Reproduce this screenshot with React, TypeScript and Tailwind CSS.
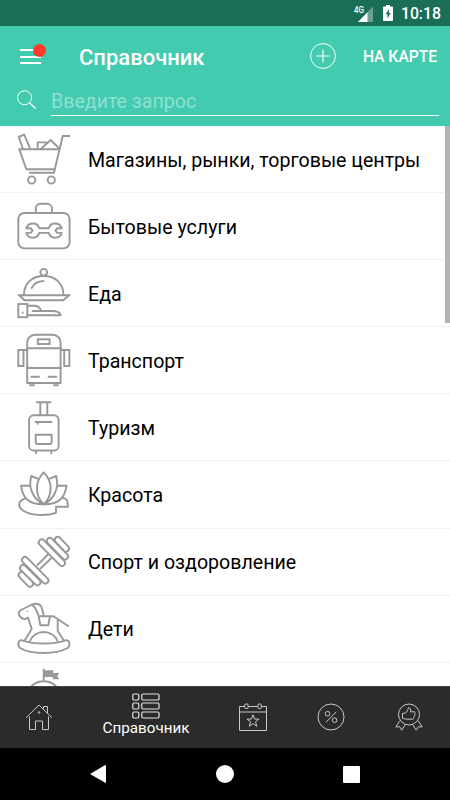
import type { ReactNode } from "react";

interface Category {
  label: string;
  icon: ReactNode;
}

// Capsule outline: a thick grey line with a thinner white one on top
function Plate({ x1, y1, x2, y2 }: { x1: number; y1: number; x2: number; y2: number }) {
  const d = `M${x1} ${y1}L${x2} ${y2}`;
  return (
    <>
      <path d={d} stroke="#989898" strokeWidth="8" />
      <path d={d} stroke="#fff" strokeWidth="4.2" />
    </>
  );
}

const CATEGORIES: Category[] = [
  {
    label: "Магазины, рынки, торговые центры",
    icon: (
      <>
        <path d="M70 10h-7.3L54 46.7H29" strokeLinecap="butt" />
        <path d="M18.3 23.3h41M19.3 23.3l7 20h28" strokeLinecap="butt" />
        <path d="M23 23L18.7 11l5.5-2.3 6 14M37.7 23v-6.6h9M41 22.7l9.7-8.7 8.6 8.7" />
        <circle cx="31.7" cy="54" r="3.6" />
        <circle cx="51.3" cy="54" r="3.6" />
      </>
    ),
  },
  {
    label: "Бытовые услуги",
    icon: (
      <>
        <rect x="18.3" y="20" width="51.3" height="35.4" rx="6" />
        <path d="M35.8 20v-4.5a4.7 4.7 0 0 1 4.7-4.7h6.7a4.7 4.7 0 0 1 4.7 4.7V20" />
        <path d="M26.3 35.3h4.5l1.8 2.3-1.8 2.3h-4.5c.9 3 3.5 4.8 6.7 4.8 2.9 0 5.3-1.8 6.3-4.8h9.4c1 3 3.4 4.8 6.3 4.8 3.2 0 5.8-1.8 6.7-4.8h-4.5l-1.8-2.3 1.8-2.3h4.5c-.9-3-3.5-4.8-6.7-4.8-2.9 0-5.3 1.8-6.3 4.8h-9.4c-1-3-3.4-4.8-6.3-4.8-3.2 0-5.8 1.8-6.7 4.8z" />
      </>
    ),
  },
  {
    label: "Еда",
    icon: (
      <>
        <circle cx="43.7" cy="12.3" r="3.4" />
        <path d="M24 34.5C24 23.5 32 16 43.7 16s19.7 7.5 19.7 18.5M31.6 28c2-4 6-6.7 12-7" />
        <path d="M18.6 35.3h51M20 36l4.5 4.3h38.7l5-4.3" />
        <rect x="18.3" y="44" width="9" height="13.2" strokeLinejoin="miter" />
        <path d="M22.7 52.5v.2M27.5 45.7h7c3 0 5 1.6 6.3 4M32.6 51h19c5 0 8.5 1 9 4.2H27.5" />
      </>
    ),
  },
  {
    label: "Транспорт",
    icon: (
      <>
        <path d="M27.2 56V15.7a8 8 0 0 1 8-8h17.4a8 8 0 0 1 8 8V56z" />
        <path d="M27 21.3h34M27 41h34M31.3 49.7H39M48.6 49.7h7.7" />
        <rect x="37.8" y="12.3" width="11.8" height="4.7" strokeLinejoin="miter" />
        <path d="M27 23h-8.7v16h5.2V23M61 23h8.4v16h-5.2V23M30 58.3h4M54 58.3h4" strokeLinejoin="miter" />
      </>
    ),
  },
  {
    label: "Туризм",
    icon: (
      <>
        <path d="M36.7 8.2h13.8M40.3 8.5V21M47.3 8.5V21" />
        <rect x="29.1" y="21.3" width="29.5" height="35.2" rx="4.6" />
        <path d="M35.5 28h16M37.8 28v1.8M36 57v2.2M51.3 57v2.2" />
        <path d="M35.7 40.7h16v7.3a2 2 0 0 1-2 2h-12a2 2 0 0 1-2-2z" />
      </>
    ),
  },
  {
    label: "Красота",
    icon: (
      <>
        <path d="M43.7 11.3C38.5 16.5 37 22 37 27c0 7 3 13 6.7 16.3C47.4 40 50.6 34 50.6 27c0-5-1.7-10.5-6.9-15.7z" />
        <path d="M37.6 17.7L31.2 15c-1.2 7-1.8 10 1 16.5 2.2 5 6.5 9.5 11.5 11.8M49.8 17.7l6.4-2.7c1.2 7 1.8 10-1 16.5-2.2 5-6.5 9.5-11.5 11.8" />
        <path d="M29.5 24.8H21c.8 5 2 10 6.5 14 4 3.5 10 4.7 16.2 4.5M58 24.8h8.5c-.8 5-2 10-6.5 14-4 3.5-10 4.7-16.3 4.5" />
        <path d="M25.5 37.3c-4 1.2-6.7 3.5-6.2 7C20 50 30 54 42 54c6 0 10-.7 14-2.2v-6h12l-.7-6.3c-1.5-2-3.5-2.5-5.3-2.7" />
      </>
    ),
  },
  {
    label: "Спорт и оздоровление",
    icon: (
      <>
        <path d="M37.5 37L48 26.5M40.5 40.5L51.5 30" />
        <Plate x1={57.7} y1={11.9} x2={66} y2={20.5} />
        <Plate x1={49.8} y1={13} x2={65} y2={28.5} />
        <Plate x1={41.7} y1={14.5} x2={62} y2={35} />
        <Plate x1={21.7} y1={47} x2={30} y2={55.7} />
        <Plate x1={23} y1={40} x2={37.5} y2={54.2} />
        <Plate x1={25} y1={32} x2={45.4} y2={52.5} />
      </>
    ),
  },
  {
    label: "Дети",
    icon: (
      <>
        <path d="M22 45.3c-4.3-.8-5 6-1.5 8 11 6.3 35.5 6.3 46.5 0 3.8-2 3-8.8-1.3-8-13 4.3-30.7 4.3-43.7 0z" />
        <path d="M30 46c2-5.5 7.5-9 13.7-9S55.5 40.5 57.5 46M25 45l6.7-11-3.7-11.5c-2.5 2-5 2-7.5-.5-2.5-2.2-2.3-5.3.5-7L31 10c6-2.5 9-1.5 10.5 2l2.5 9.3h9.5c5 2.7 9.5 6.5 14.7 9.7M57.7 25v11l5.8 9M32 10c3.5 1 5 6 6.7 11.3l1.6 8.9h8l1.7-8.9M38.7 21.3H44" />
        <path d="M27.3 16.3v.1" strokeWidth="1.4" />
      </>
    ),
  },
  {
    label: "",
    icon: (
      <>
        <path d="M43.7 7.5V19M26 37a17.7 17.7 0 1 1 35.4 0" />
        <path d="M44 8.3h9.2V11h6L57.3 14l2.2 3.2h-6.8v-2.3H44z" fill="#989898" stroke="none" />
      </>
    ),
  },
];

function CategoryRow({ label, icon }: Category) {
  return (
    <div className="flex h-[67.1px] shrink-0 items-center border-b border-[#f1f1ec]">
      <svg
        viewBox="0 0 88 67"
        className="h-[67px] w-[88px] shrink-0"
        fill="none"
        stroke="#989898"
        strokeWidth="1.9"
        strokeLinecap="round"
        strokeLinejoin="round"
      >
        {icon}
      </svg>
      <span className="mt-[3px] whitespace-nowrap text-[19.6px] leading-6">{label}</span>
    </div>
  );
}

function StatusBar() {
  return (
    <div className="flex h-[26px] items-center justify-end bg-[#1a6e58] pr-[9px] text-white">
      <svg viewBox="0 0 20 18" className="mt-px h-[18px] w-5">
        <path d="M19 1.5V17H4z" fill="#fff" fillOpacity=".35" />
        <path d="M13.5 7.2V17H4z" fill="#fff" />
        <text x="0" y="8" fill="#fff" fontSize="9.5" fontWeight="500" textLength="10" lengthAdjust="spacingAndGlyphs">
          4G
        </text>
      </svg>
      <svg viewBox="0 0 10 16" className="ml-[9px] h-4 w-[10px]" fill="#fff">
        <path d="M3 0h4v1.6h2.3q.7 0 .7.7v13q0 .7-.7.7H.7q-.7 0-.7-.7v-13q0-.7.7-.7H3z" />
        <path d="M6 4L2.5 9.3h2V13.500L7.7 8H5.800z" fill="#1a6e58" />
      </svg>
      <span className="ml-2 mt-[2px] text-[15.8px] font-medium leading-none">10:18</span>
    </div>
  );
}

function Header() {
  return (
    <header className="h-[100px] bg-[#43cbb0] text-white">
      <div className="flex h-[62px] items-center">
        <div className="relative mb-px ml-5 h-[15px] w-[21px]">
          <div className="flex h-full flex-col justify-between">
            <div className="h-[2px] bg-white" />
            <div className="h-[2px] bg-white" />
            <div className="h-[2px] bg-white" />
          </div>
          <div className="absolute -top-[5px] left-[13px] size-[13px] rounded-full bg-[#ff3a2b]" />
        </div>
        <h1 className="ml-[38px] mt-px text-[22px] font-medium">Справочник</h1>
        <svg viewBox="0 0 26 26" className="ml-auto mb-[2px] size-[26px]" fill="none" stroke="#fff">
          <circle cx="13" cy="13" r="12.4" />
          <path d="M6.5 13h13M13 6.5v13" strokeWidth="1.2" />
        </svg>
        <span className="ml-[27px] mr-[13px] mt-[2px] text-[15.6px] font-medium">НА КАРТЕ</span>
      </div>
      <div className="flex h-[38px] items-start">
        <svg viewBox="0 0 20 20" className="ml-[17px] mt-[2px] size-5" fill="none" stroke="#fff">
          <circle cx="7.6" cy="7.7" r="7" />
          <path d="M12.7 13l6 5.5" strokeWidth="1.4" />
        </svg>
        <div className="ml-[14px] mr-[11px] h-[28px] flex-1 border-b border-white text-[19.6px] leading-[28px] text-[#8ee0d0]">
          Введите запрос
        </div>
      </div>
    </header>
  );
}

function TabBar() {
  return (
    <nav className="flex h-[62px] shrink-0 items-center border-t border-[#454545] bg-[#2b2b2b] text-white">
      <div className="flex w-[78px] justify-center">
        <svg viewBox="0 0 28 28" className="mb-[2px] size-7" fill="none" stroke="#c8c8c8">
          <path d="M1 14.8L14 2l13 12.8M4.5 13.5v13h6v-8.5h7v8.5h6v-13M18.5 5.8V3.5h4V10" />
          <circle cx="14" cy="9.5" r=".8" />
        </svg>
      </div>
      <div className="flex h-full w-[136px] flex-col items-center">
        <svg viewBox="0 0 28 26" className="mt-[6px] h-[26px] w-7" fill="none" stroke="#e4e4e4" strokeWidth="1.2">
          <rect x=".8" y="1" width="6" height="6" rx="1.2" />
          <rect x="9.8" y="1" width="17.2" height="6" rx="1.2" />
          <rect x=".8" y="10" width="6" height="6" rx="1.2" />
          <rect x="9.8" y="10" width="17.2" height="6" rx="1.2" />
          <rect x=".8" y="19" width="6" height="6" rx="1.2" />
          <rect x="9.8" y="19" width="17.2" height="6" rx="1.2" />
        </svg>
        <span className="text-[15.2px] leading-[18px]">Справочник</span>
      </div>
      <div className="flex w-[78px] justify-center">
        <svg viewBox="0 0 28 28" className="mb-[2px] size-7" fill="none" stroke="#c8c8c8">
          <path d="M5.5 3.5h-5v24h27v-24h-5M9.5 3.5h9M.5 9h27" />
          <rect x="5.7" y="1" width="3.4" height="4.5" rx="1" />
          <rect x="18.9" y="1" width="3.4" height="4.5" rx="1" />
          <path d="M14 11.8l1.6 4.3h4.4l-3.5 2.7 1.3 4.5-3.8-2.7-3.8 2.7 1.3-4.5L8 16.1h4.4z" />
        </svg>
      </div>
      <div className="flex w-[78px] justify-center">
        <svg viewBox="0 0 28 28" className="mb-[2px] size-7" fill="none" stroke="#c8c8c8">
          <circle cx="14" cy="14" r="13" />
          <circle cx="10.6" cy="10.7" r="2.3" />
          <circle cx="17.6" cy="17.2" r="2.3" />
          <path d="M19.3 8.8L9 19.3" />
        </svg>
      </div>
      <div className="flex w-[78px] justify-center">
        <svg viewBox="0 0 28 28" className="mb-[2px] size-7" fill="none" stroke="#c8c8c8" strokeLinejoin="round">
          <circle cx="14" cy="11.5" r="10.5" />
          <path d="M4.7 17.8L.8 24l3.9-.3 2 3.5 3.6-5.5M23.3 17.8l3.9 6.2-3.9-.3-2 3.5-3.6-5.5" />
          <path d="M7.5 10.5l3-.5c1.5-1.2 2.5-3 2.8-5.2 2-.3 2.7 1.5 2.2 4h4c1 .5.8 1.5.2 2 .5.9.2 1.6-.5 2 .3.9 0 1.5-.7 1.8.2 1-.3 1.6-1.2 1.6h-6l-3-.8-.8.2z" />
        </svg>
      </div>
    </nav>
  );
}

function SystemNav() {
  return (
    <div className="flex h-[52px] shrink-0 items-center justify-between bg-black px-[90px]">
      <svg viewBox="0 0 17 18" className="h-[18px] w-[17px]" fill="#fff">
        <path d="M.8 8.4L14.8.3q1.2-.5 1.2.8v15.8q0 1.300-1.200.7L.8 9.600q-.8-.6 0-1.200z" />
      </svg>
      <div className="size-[18px] rounded-full bg-white" />
      <div className="size-[17px] rounded-[1px] bg-white" />
    </div>
  );
}

export default function App() {
  return (
    <div className="flex h-[800px] w-[450px] flex-col overflow-hidden bg-white font-[Roboto,sans-serif]">
      <StatusBar />
      <Header />
      <main className="relative flex min-h-0 flex-1 flex-col overflow-hidden text-black">
        {CATEGORIES.map((category, i) => (
          <CategoryRow key={i} {...category} />
        ))}
        <div className="absolute right-0 top-0 h-[197px] w-[5px] bg-[#b4b4b4]" />
      </main>
      <TabBar />
      <SystemNav />
    </div>
  );
}
